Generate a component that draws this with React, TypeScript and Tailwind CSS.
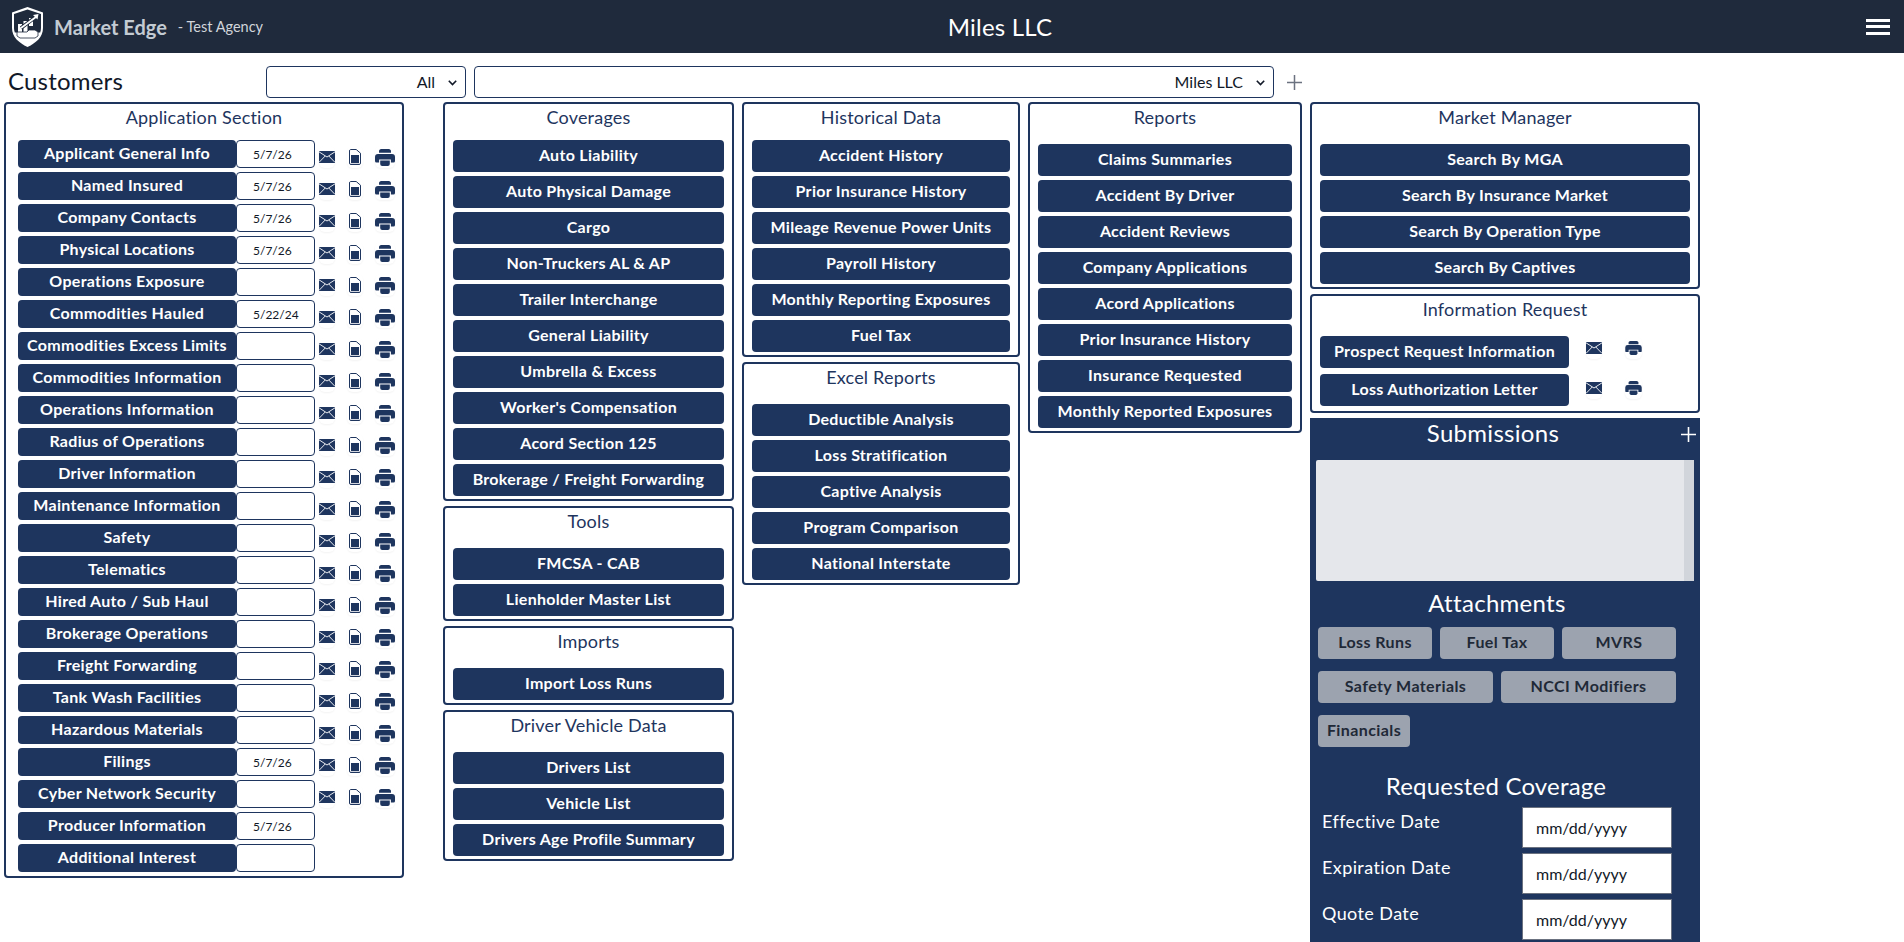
import React from "react";

const FONT = "font-['Lato','Liberation_Sans',sans-serif]";

function Mail() {
  return (
    <svg width="16" height="12" viewBox="0 0 16 12">
      <rect width="16" height="12" fill="#1e355e" />
      <path d="M0 .8 8 6l8-5.2M0 11.4 6.2 5M16 11.4 9.8 5" fill="none" stroke="#fff" strokeWidth="0.9" />
    </svg>
  );
}
function Doc() {
  return (
    <svg width="12" height="16" viewBox="0 0 12 16">
      <path d="M1.500.5h5.700L11.500 4.200V14a1.500 1.500 0 0 1-1.500 1.500H2A1.500 1.500 0 0 1 .5 14V2A1.500 1.500 0 0 1 1.500.5Z" fill="#fff" stroke="#1e355e" />
      <rect x="2" y="6" width="8" height="8.200" fill="#1e355e" />
    </svg>
  );
}
function Printer({ w = 20, h = 17 }: { w?: number; h?: number }) {
  return (
    <svg width={w} height={h} viewBox="0 0 20 17">
      <path d="M4 3.800V2.200C4 1 5 0 6.200 0h7.600C15 0 16 1 16 2.200V3.800Z" fill="#1e355e" />
      <path d="M3 5h14a3 3 0 0 1 3 3v4a1.500 1.500 0 0 1-1.500 1.500h-2.600V10.500H4.100V13.500H1.500A1.500 1.500 0 0 1 0 12V8a3 3 0 0 1 3-3Z" fill="#1e355e" />
      <path d="M5.200 11.600h9.600v3.400a2 2 0 0 1-2 2H7.200a2 2 0 0 1-2-2Z" fill="#1e355e" />
    </svg>
  );
}
function IconBox({ w, children }: { w: string; children: React.ReactNode }) {
  return <span className={`flex h-[22px] shrink-0 items-center justify-center rounded-md shadow-xs ${w}`}>{children}</span>;
}

function Btn({ label, className = "" }: { label: string; className?: string }) {
  return (
    <button className={`flex h-8 shrink-0 items-center justify-center rounded bg-[#1e355e] pb-[2px] text-[16px] font-bold tracking-[0.3px] text-white ${className}`}>
      {label}
    </button>
  );
}

function Panel({ title, items, className = "", listClass = "mt-[17px]" }: { title: string; items: string[]; className?: string; listClass?: string }) {
  return (
    <section className={`rounded border-2 border-[#1e355e] bg-white px-2 pb-[3px] pt-[3px] ${className}`}>
      <h2 className="text-center text-[18px] leading-[20px] tracking-[0.2px] text-[#1e355e]">{title}</h2>
      <div className={`flex flex-col gap-1 ${listClass}`}>
        {items.map((t) => (
          <Btn key={t} label={t} />
        ))}
      </div>
    </section>
  );
}

const rows: [string, string, boolean][] = [
  ["Applicant General Info", "5/7/26", true],
  ["Named Insured", "5/7/26", true],
  ["Company Contacts", "5/7/26", true],
  ["Physical Locations", "5/7/26", true],
  ["Operations Exposure", "", true],
  ["Commodities Hauled", "5/22/24", true],
  ["Commodities Excess Limits", "", true],
  ["Commodities Information", "", true],
  ["Operations Information", "", true],
  ["Radius of Operations", "", true],
  ["Driver Information", "", true],
  ["Maintenance Information", "", true],
  ["Safety", "", true],
  ["Telematics", "", true],
  ["Hired Auto / Sub Haul", "", true],
  ["Brokerage Operations", "", true],
  ["Freight Forwarding", "", true],
  ["Tank Wash Facilities", "", true],
  ["Hazardous Materials", "", true],
  ["Filings", "5/7/26", true],
  ["Cyber Network Security", "", true],
  ["Producer Information", "5/7/26", false],
  ["Additional Interest", "", false],
];

function Logo() {
  return (
    <svg width="33" height="40" viewBox="0 0 33 40">
      <path d="M16.500 0 32 5.500V21c0 9-7 15-15.500 19C8 36 1 30 1 21V5.500Z" fill="#fff" />
      <path d="M16.500 2.500 30 7v14c0 1.500-.3 3-.8 4.500H3.800C3.300 24 3 22.500 3 21V7Z" fill="#1f2a3c" />
      <rect x="7" y="17" width="4" height="8" fill="#fff" />
      <rect x="12.500" y="14" width="4" height="11" fill="#fff" />
      <rect x="18" y="11" width="4" height="8" fill="#fff" />
      <path d="m10 21 16-12" stroke="#1f2a3c" strokeWidth="3.500" />
      <path d="m10 21 15-11" stroke="#fff" strokeWidth="1.800" />
      <path d="m22 8 5.500-1-1 5.500Z" fill="#fff" />
      <path d="M6 25h10l2-2h6l3 2v4l-3 2H9l-3-2Z" fill="#fff" stroke="#1f2a3c" strokeWidth="0.8" />
    </svg>
  );
}

function Attach({ label, className }: { label: string; className: string }) {
  return (
    <button className={`flex h-8 items-center justify-center rounded bg-[#9ca3af] pb-[2px] text-[16px] font-bold tracking-[0.4px] text-[#1f2937] ${className}`}>{label}</button>
  );
}

function Sel({ value, className }: { value: string; className: string }) {
  return (
    <div className={`relative h-8 ${className}`}>
      <select className="h-8 w-full appearance-none rounded border border-[#1e355e] bg-white pr-[30px] text-right text-[16px] text-[#111827]">
        <option>{value}</option>
      </select>
      <svg className="pointer-events-none absolute right-[9px] top-[14px]" width="9" height="6" viewBox="0 0 9 6">
        <path d="m.8.8 3.700 3.700L8.200.8" fill="none" stroke="#111827" strokeWidth="1.600" />
      </svg>
    </div>
  );
}

export default function App() {
  return (
    <div className={`h-screen overflow-hidden bg-white ${FONT}`}>
      <header className="relative flex h-[53px] items-center bg-[#1f2a3c]">
        <div className="ml-[11px] flex items-center">
          <Logo />
          <span className="ml-[10px] text-[20px] font-bold text-[#c3cbd3]">Market Edge</span>
          <span className="ml-[11px] text-[14.500px] text-[#d1d5db]">- Test Agency</span>
        </div>
        <h1 className="absolute left-[96px] right-0 text-center text-[24px] tracking-[0.2px] text-white">Miles LLC</h1>
        <div className="ml-auto mr-[14px] flex flex-col gap-[3.500px]">
          <span className="h-[3px] w-6 bg-white" />
          <span className="h-[3px] w-6 bg-white" />
          <span className="h-[3px] w-6 bg-white" />
        </div>
      </header>

      <div className="flex h-[49px] items-start pt-[13px]">
        <h2 className="-mt-[1px] ml-2 w-[258px] text-[24px] leading-[32px] tracking-[0.2px] text-[#111827]">Customers</h2>
        <Sel value="All" className="w-[200px]" />
        <Sel value="Miles LLC" className="ml-2 w-[800px]" />
        <svg className="ml-[13px] mt-[9px]" width="15" height="15" viewBox="0 0 15 15">
          <path d="M7.500 0v15M0 7.500h15" stroke="#6b7280" strokeWidth="1.500" />
        </svg>
      </div>

      <main className="flex items-start">
        <section className="ml-1 w-[400px] rounded border-2 border-[#1e355e] pl-3 pt-[2px]">
          <h2 className="pr-3 text-center text-[18px] leading-[22px] tracking-[0.2px] text-[#1e355e]">Application Section</h2>
          <div className="mt-[12px] flex flex-col">
            {rows.map(([label, date, icons]) => (
              <div key={label} className="flex h-8 items-start">
                <button className="flex h-7 w-[218px] shrink-0 items-center justify-center rounded bg-[#1e355e] pb-[2px] text-[16px] font-bold tracking-[0.3px] text-white">{label}</button>
                <input
                  readOnly
                  value={date}
                  className="h-7 w-[79px] shrink-0 rounded border border-[#1e355e] bg-white pl-4 text-[12px] text-[#111827]"
                />
                {icons && (
                  <div className="flex items-start pl-1 pt-[6px]">
                    <IconBox w="w-[16px]"><Mail /></IconBox>
                    <IconBox w="w-[16px] ml-[12px]"><Doc /></IconBox>
                    <IconBox w="w-[20px] ml-[12px]"><Printer /></IconBox>
                  </div>
                )}
              </div>
            ))}
          </div>
        </section>

        <div className="ml-[39px] flex w-[291px] flex-col gap-[5px]">
          <Panel title="Coverages" listClass="mt-[13px]" items={["Auto Liability", "Auto Physical Damage", "Cargo", "Non-Truckers AL & AP", "Trailer Interchange", "General Liability", "Umbrella & Excess", "Worker's Compensation", "Acord Section 125", "Brokerage / Freight Forwarding"]} />
          <Panel title="Tools" items={["FMCSA - CAB", "Lienholder Master List"]} />
          <Panel title="Imports" items={["Import Loss Runs"]} />
          <Panel title="Driver Vehicle Data" items={["Drivers List", "Vehicle List", "Drivers Age Profile Summary"]} />
        </div>

        <div className="ml-2 flex w-[278px] flex-col gap-[5px]">
          <Panel title="Historical Data" listClass="mt-[13px]" items={["Accident History", "Prior Insurance History", "Mileage Revenue Power Units", "Payroll History", "Monthly Reporting Exposures", "Fuel Tax"]} />
          <Panel title="Excel Reports" items={["Deductible Analysis", "Loss Stratification", "Captive Analysis", "Program Comparison", "National Interstate"]} />
        </div>

        <Panel className="ml-2 w-[274px]" title="Reports" items={["Claims Summaries", "Accident By Driver", "Accident Reviews", "Company Applications", "Acord Applications", "Prior Insurance History", "Insurance Requested", "Monthly Reported Exposures"]} />

        <div className="ml-2 flex w-[390px] flex-col gap-[5px]">
          <Panel title="Market Manager" items={["Search By MGA", "Search By Insurance Market", "Search By Operation Type", "Search By Captives"]} />

          <section className="rounded border-2 border-[#1e355e] px-2 pb-[5px] pt-[3px]">
            <h2 className="text-center text-[18px] leading-[20px] tracking-[0.2px] text-[#1e355e]">Information Request</h2>
            <div className="mt-[17px] flex flex-col gap-[6px]">
              {[
                { t: "Prospect Request Information", pad: "pt-[1px]" },
                { t: "Loss Authorization Letter", pad: "pt-[3px]" },
              ].map(({ t, pad }) => (
                <div key={t} className="flex items-start">
                  <Btn label={t} className="w-[249px]" />
                  <div className={`flex items-center pl-[17px] ${pad}`}>
                    <IconBox w="w-[16px]"><Mail /></IconBox>
                    <IconBox w="w-[17px] ml-[23px]"><Printer w={17} h={14} /></IconBox>
                  </div>
                </div>
              ))}
            </div>
          </section>

          <section className="h-[530px] bg-[#1e355e] text-white">
            <div className="relative h-[42px] pr-[24px] text-center text-[24px] leading-[32px] tracking-[0.3px]">
              <span className="relative top-[-1px]">Submissions</span>
              <svg className="absolute right-[4px] top-[9px]" width="15" height="15" viewBox="0 0 15 15">
                <path d="M7.500 0v15M0 7.500h15" stroke="#fff" strokeWidth="1.600" />
              </svg>
            </div>
            <div className="mx-[6px] flex h-[121px] justify-end rounded-[2px] bg-[#e5e7eb]">
              <span className="h-full w-[10px] bg-[#d1d5db]" />
            </div>
            <h3 className="mt-[6px] pr-[16px] text-center text-[24px] leading-[32px] tracking-[0.3px]">Attachments</h3>
            <div className="mt-[8px] flex flex-col gap-3 pl-2">
              <div className="flex gap-2">
                <Attach label="Loss Runs" className="w-[114px]" />
                <Attach label="Fuel Tax" className="w-[114px]" />
                <Attach label="MVRS" className="w-[114px]" />
              </div>
              <div className="flex gap-2">
                <Attach label="Safety Materials" className="w-[175px]" />
                <Attach label="NCCI Modifiers" className="w-[175px]" />
              </div>
              <div className="flex">
                <Attach label="Financials" className="w-[92px]" />
              </div>
            </div>
            <h3 className="mt-[23px] pr-[18px] text-center text-[24px] leading-[32px] tracking-[0.2px]">Requested Coverage</h3>
            <div className="mt-[5px] flex flex-col gap-[5px] pl-3">
              {["Effective Date", "Expiration Date", "Quote Date"].map((l) => (
                <div key={l} className="flex items-start">
                  <label className="w-[200px] text-[18px] leading-[28px] tracking-[0.4px]">{l}</label>
                  <input
                    readOnly
                    value="mm/dd/yyyy"
                    className="h-[41px] w-[150px] border border-[#6b7280] bg-white px-[13px] text-[16px] text-[#111827]"
                  />
                </div>
              ))}
            </div>
          </section>
        </div>
      </main>
    </div>
  );
}
